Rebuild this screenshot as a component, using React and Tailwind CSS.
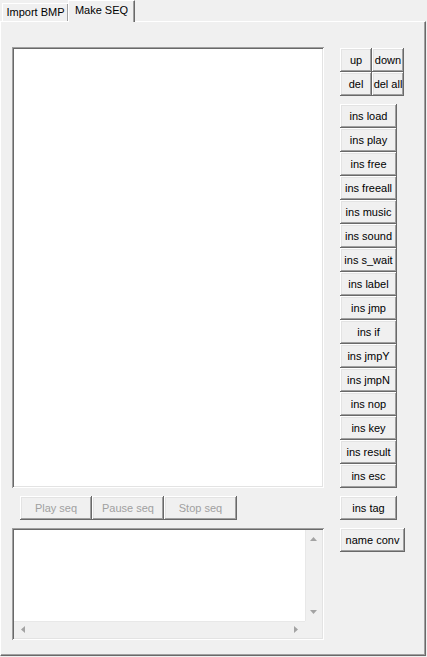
import React from 'react';

const raised =
  'bg-[#f0f0f0] shadow-[inset_-1px_-1px_#696969,inset_1px_1px_#ffffff,inset_-2px_-2px_#a0a0a0,inset_2px_2px_#e3e3e3]';
const sunken =
  'bg-white shadow-[inset_1px_1px_#a0a0a0,inset_-1px_-1px_#ffffff,inset_2px_2px_#696969,inset_-2px_-2px_#e3e3e3]';

const Btn = ({ children, className = '', disabled }) => (
  <div
    className={`${raised} flex items-center justify-center h-[24px] ${
      disabled ? 'text-[#a0a0a0]' : 'text-black'
    } ${className}`}
  >
    {children}
  </div>
);

const Arrow = ({ dir }) => {
  const pts = {
    up: '0,4 3.5,0 7,4',
    down: '0,0 7,0 3.5,4',
    left: '4,0 4,7 0,3.5',
    right: '0,0 0,7 4,3.5',
  }[dir];
  const vert = dir === 'up' || dir === 'down';
  return (
    <svg width={vert ? 7 : 4} height={vert ? 4 : 7} viewBox={vert ? '0 0 7 4' : '0 0 4 7'}>
      <polygon points={pts} fill="#a3a3a3" />
    </svg>
  );
};

const insButtons = [
  'ins load',
  'ins play',
  'ins free',
  'ins freeall',
  'ins music',
  'ins sound',
  'ins s_wait',
  'ins label',
  'ins jmp',
  'ins if',
  'ins jmpY',
  'ins jmpN',
  'ins nop',
  'ins key',
  'ins result',
  'ins esc',
];

export default function App() {
  return (
    <div
      className="w-[427px] h-[657px] bg-[#f0f0f0] flex flex-col text-[11px] leading-none select-none"
      style={{ fontFamily: '"Liberation Sans", Arial, sans-serif' }}
    >
      {/* Tabs */}
      <div className="h-[21px] flex items-end pl-[2px] shrink-0">
        <div className="h-[18px] w-[66px] flex items-center justify-center border-t border-l border-white shadow-[inset_-1px_0_#a0a0a0]">
          Import BMP
        </div>
        <div className="relative z-10 -mb-[1px] h-[22px] w-[67px] bg-[#f0f0f0] flex items-center justify-center pb-[2px] border-t border-l border-white border-r border-r-[#696969] shadow-[inset_-1px_0_#a0a0a0]">
          Make SEQ
        </div>
      </div>

      {/* Panel */}
      <div className="flex-1 border-t border-l border-white border-r border-b border-r-[#696969] border-b-[#696969] shadow-[inset_-1px_-1px_#a0a0a0] mb-[1px] mr-[1px] flex pl-[11px] pt-[25px]">
        {/* Left column */}
        <div className="w-[312px] flex flex-col">
          <div className={`${sunken} h-[441px]`} />
          <div className="flex mt-[8px] ml-[8px]">
            <Btn disabled className="w-[72px]">Play seq</Btn>
            <Btn disabled className="w-[72px]">Pause seq</Btn>
            <Btn disabled className="w-[73px]">Stop seq</Btn>
          </div>
          <div className={`${sunken} mt-[8px] h-[112px] p-[2px] flex flex-col`}>
            <div className="flex-1 flex">
              <div className="flex-1 bg-white" />
              <div className="w-[17px] bg-[#f0f0f0] flex flex-col items-center justify-between py-[7px] shadow-[inset_1px_0_#e8e8e8]">
                <Arrow dir="up" />
                <Arrow dir="down" />
              </div>
            </div>
            <div className="h-[17px] flex">
              <div className="flex-1 bg-[#f0f0f0] flex items-center justify-between px-[7px] shadow-[inset_0_1px_#e8e8e8]">
                <Arrow dir="left" />
                <Arrow dir="right" />
              </div>
              <div className="w-[17px] bg-[#f0f0f0]" />
            </div>
          </div>
        </div>

        {/* Right column */}
        <div className="ml-[16px] pt-[1px] flex flex-col">
          <div className="grid grid-cols-[32px_32px]">
            <Btn>up</Btn>
            <Btn>down</Btn>
            <Btn>del</Btn>
            <Btn>del all</Btn>
          </div>
          <div className="mt-[8px] flex flex-col w-[57px]">
            {insButtons.map((label) => (
              <Btn key={label}>{label}</Btn>
            ))}
          </div>
          <Btn className="mt-[8px] w-[57px]">ins tag</Btn>
          <Btn className="mt-[8px] w-[65px]">name conv</Btn>
        </div>
      </div>
    </div>
  );
}
